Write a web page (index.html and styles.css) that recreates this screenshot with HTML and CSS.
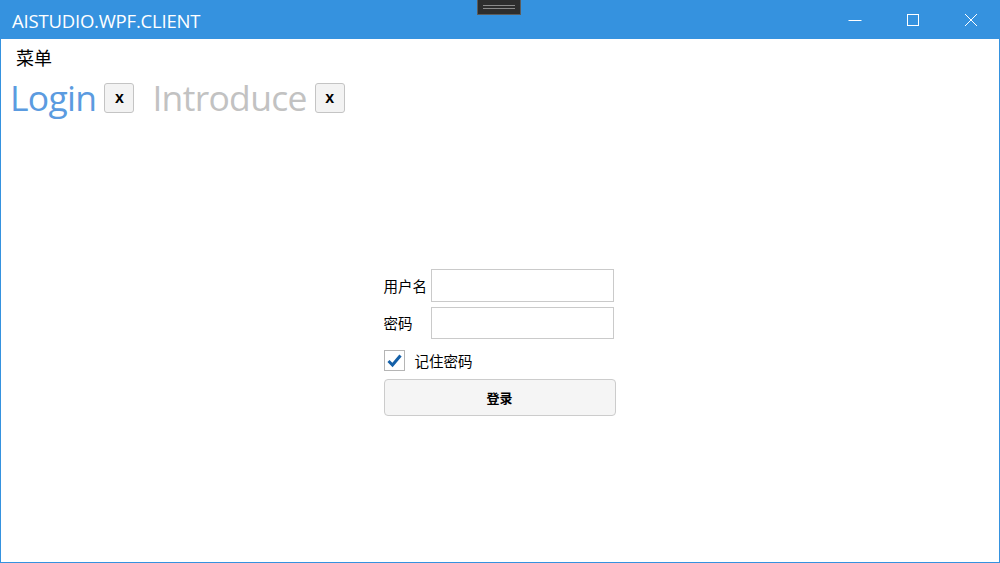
FILE: index.html
```html
<!DOCTYPE html>
<html lang="zh">
<head>
<meta charset="utf-8">
<title>AISTUDIO.WPF.CLIENT</title>
<link rel="stylesheet" href="styles.css">
</head>
<body>
<div class="window">
  <div class="titlebar">
    <div class="title">AISTUDIO.WPF.CLIENT</div>
    <div class="handle"><span class="handle-line"></span></div>
    <div class="controls">
      <div class="ctrl">
        <svg width="14" height="14" viewBox="0 0 14 14"><path d="M0.5 7.5H13.5" stroke="#fff" stroke-width="1"/></svg>
      </div>
      <div class="ctrl">
        <svg width="14" height="14" viewBox="0 0 14 14"><rect x="1.5" y="1.5" width="11" height="11" fill="none" stroke="#fff" stroke-width="1"/></svg>
      </div>
      <div class="ctrl">
        <svg width="14" height="14" viewBox="0 0 14 14"><path d="M1 1L13 13M13 1L1 13" stroke="#fff" stroke-width="1"/></svg>
      </div>
    </div>
  </div>
  <div class="menu"><span class="menu-item">菜单</span></div>
  <div class="tabs">
    <div class="tab active"><span class="tab-label">Login</span><button class="tab-close">x</button></div>
    <div class="tab"><span class="tab-label">Introduce</span><button class="tab-close">x</button></div>
  </div>
  <div class="main">
    <div class="form">
      <div class="row">
        <label class="label">用户名</label>
        <div class="input"></div>
      </div>
      <div class="row">
        <label class="label">密码</label>
        <div class="input"></div>
      </div>
      <div class="check-row">
        <span class="checkbox">
          <svg width="17" height="17" viewBox="0 0 17 17"><path d="M2.5 9L6.5 13L14.5 3.5" fill="none" stroke="#1560a8" stroke-width="3"/></svg>
        </span>
        <span class="check-label">记住密码</span>
      </div>
      <button class="login-btn">登录</button>
    </div>
  </div>
</div>
</body>
</html>
```
FILE: styles.css
```css
* { box-sizing: border-box; }
html, body { margin: 0; padding: 0; }
body {
  width: 1000px;
  height: 563px;
  overflow: hidden;
  background: #fff;
  font-family: "Noto Sans", "Noto Sans CJK SC", sans-serif;
}
.window {
  width: 1000px;
  height: 563px;
  display: flex;
  flex-direction: column;
  border: 1px solid #3592df;
  border-top: none;
}
.titlebar {
  height: 39px;
  margin: 0 -1px;
  background: #3592df;
  display: flex;
  align-items: center;
  position: relative;
  flex-shrink: 0;
}
.title {
  color: #fff;
  font-family: "Open Sans", "Noto Sans", sans-serif;
  font-size: 18.5px;
  padding-left: 12px;
  letter-spacing: -0.2px;
  margin-top: 2px;
}
.handle {
  position: absolute;
  left: 477px;
  top: 0;
  width: 44px;
  height: 15px;
  background: #2d2d2d;
  border: 1px solid #5c5c5c;
  border-top: none;
  display: flex;
  align-items: center;
  justify-content: center;
}
.handle-line {
  width: 32px;
  height: 4px;
  border-top: 1px solid #8a8a8a;
  border-bottom: 1px solid #8a8a8a;
}
.controls {
  margin-left: auto;
  display: flex;
  height: 100%;
}
.ctrl {
  width: 58px;
  height: 100%;
  display: flex;
  align-items: center;
  justify-content: center;
}
.menu {
  height: 32px;
  padding-left: 15px;
  display: flex;
  align-items: center;
  flex-shrink: 0;
}
.menu-item {
  font-family: "Noto Sans CJK SC", sans-serif;
  font-size: 18px;
  color: #000;
  margin-top: 3px;
}
.tabs {
  display: flex;
  align-items: center;
  padding-left: 9px;
  padding-top: 7px;
  height: 52px;
  gap: 18px;
  flex-shrink: 0;
}
.tab {
  display: flex;
  align-items: center;
  gap: 8px;
}
.tab-label {
  font-family: "Open Sans", "Noto Sans", sans-serif;
  font-size: 35.5px;
  color: #c2c2c2;
  letter-spacing: -0.7px;
  line-height: 1;
  margin-top: -6px;
}
.tab.active .tab-label { color: #5b9be0; }
.tab-close {
  width: 30px;
  height: 30px;
  padding: 0;
  border: 1px solid #c4c4c4;
  border-radius: 3px;
  background: #f3f3f3;
  font-family: "Liberation Sans", Arial, sans-serif;
  font-weight: bold;
  font-size: 16px;
  color: #000;
  line-height: 1;
  margin-top: -5px;
}
.main {
  flex: 1;
  display: flex;
  align-items: center;
  justify-content: center;
  padding-top: 0;
}
.form {
  width: 232px;
  display: flex;
  flex-direction: column;
  margin-left: -1px;
}
.row {
  display: flex;
  align-items: center;
  margin-bottom: 5px;
}
.label {
  width: 47px;
  font-family: "Noto Sans CJK SC", sans-serif;
  font-size: 14.5px;
  color: #000;
  margin-top: -1px;
}
.input {
  width: 183px;
  height: 33px;
  border: 1px solid #cacaca;
  background: #fff;
}
.row + .row .input { height: 32px; }
.check-row {
  display: flex;
  align-items: center;
  margin-top: 5px;
  height: 22px;
}
.checkbox {
  width: 21px;
  height: 21px;
  border: 1px solid #b5b5b5;
  display: flex;
  align-items: center;
  justify-content: center;
  background: #fff;
}
.check-label {
  margin-left: 10px;
  font-family: "Noto Sans CJK SC", sans-serif;
  font-size: 14.5px;
  color: #000;
}
.login-btn {
  margin-top: 8px;
  width: 232px;
  height: 37px;
  border: 1px solid #cccccc;
  border-radius: 4px;
  background: #f5f5f5;
  font-family: "Noto Sans CJK SC", sans-serif;
  font-weight: bold;
  font-size: 13px;
  color: #000;
  padding: 0;
}
```
